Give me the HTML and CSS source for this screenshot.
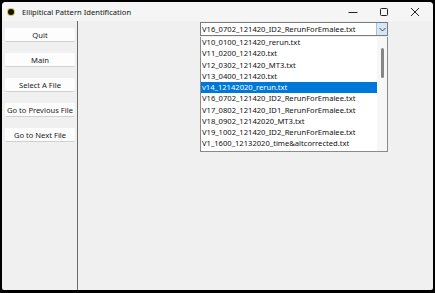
FILE: index.html
```html
<!DOCTYPE html>
<html lang="en">
<head>
  <meta charset="UTF-8">
  <title>Ellipitical Pattern Identification</title>
  <link rel="stylesheet" href="styles.css">
</head>
<body>
  <div class="window">
    <!-- title bar -->
    <div class="titlebar">
      <span class="app-icon"></span>
      <span class="title">Ellipitical Pattern Identification</span>
      <div class="controls">
        <svg width="10" height="10" viewBox="0 0 10 10"><path d="M0.5 5.5h9" stroke="#222" stroke-width="1"/></svg>
        <svg width="10" height="10" viewBox="0 0 10 10"><rect x="1.5" y="1.5" width="7" height="7" rx="1" fill="none" stroke="#222" stroke-width="1"/></svg>
        <svg width="10" height="10" viewBox="0 0 10 10"><path d="M1 1l8 8M9 1l-8 8" stroke="#222" stroke-width="1"/></svg>
      </div>
    </div>

    <div class="main">
      <!-- left buttons -->
      <div class="sidebar">
        <button class="btn">Quit</button>
        <button class="btn">Main</button>
        <button class="btn">Select A File</button>
        <button class="btn">Go to Previous File</button>
        <button class="btn">Go to Next File</button>
      </div>

      <!-- file chooser -->
      <div class="content">
        <div class="combo">
          <div class="combo-text">V16_0702_121420_ID2_RerunForEmalee.txt</div>
          <div class="combo-arrow">
            <svg width="7" height="5" viewBox="0 0 7 5"><path d="M0.5 1l3 3 3-3" fill="none" stroke="#444" stroke-width="1"/></svg>
          </div>
        </div>
        <div class="dropdown">
          <ul class="items">
            <li>V10_0100_121420_rerun.txt</li>
            <li>V11_0200_121420.txt</li>
            <li>V12_0302_121420_MT3.txt</li>
            <li>V13_0400_121420.txt</li>
            <li class="selected">v14_12142020_rerun.txt</li>
            <li>V16_0702_121420_ID2_RerunForEmalee.txt</li>
            <li>V17_0802_121420_ID1_RerunForEmalee.txt</li>
            <li>V18_0902_12142020_MT3.txt</li>
            <li>V19_1002_121420_ID2_RerunForEmalee.txt</li>
            <li>V1_1600_12132020_time&amp;altcorrected.txt</li>
          </ul>
          <div class="scrollbar"><div class="thumb"></div></div>
        </div>
      </div>
    </div>
  </div>
</body>
</html>
```

FILE: styles.css
```css
/* reset */
body {
  margin: 0;
  background: #000;
  font-family: "Noto Sans", "Open Sans", sans-serif;
  color: #111;
}

/* === window === */
.window {
  margin: 2px 2px 3px 2px;
  height: 288px;
  background: #f0f0f0;
  border-radius: 4px 4px 2px 2px;
  display: flex;
  flex-direction: column;
  overflow: hidden;
}

.titlebar {
  height: 19px;
  background: #f5f5f5;
  display: flex;
  align-items: center;
  padding-left: 6px;
}
.app-icon {
  width: 6px;
  height: 6px;
  border-radius: 50%;
  background: #111;
  box-shadow: 0 0 0 1px #d8c24a;
  margin-right: 8px;
}
.title {
  font-size: 7.6px;
  color: #111;
}
.controls {
  margin-left: auto;
  display: flex;
  gap: 21px;
  padding-right: 13px;
}

/* === body === */
.main {
  flex: 1;
  display: flex;
}
.sidebar {
  width: 76px;
  border-right: 1px solid #6a6a6a;
  display: flex;
  flex-direction: column;
  gap: 11px;
  padding: 7px 0 0 3px;
  box-sizing: border-box;
}
.btn {
  width: 70px;
  height: 14px;
  padding: 0;
  background: #fdfdfd;
  border: none;
  border-bottom: 1px solid #d0d0d0;
  border-radius: 2px;
  font-family: inherit;
  font-size: 7.6px;
  color: #222;
  white-space: nowrap;
}

.content {
  flex: 1;
  padding: 1px 0 0 122px;
}

/* === combobox === */
.combo {
  width: 188px;
  height: 14px;
  box-sizing: border-box;
  border: 1px solid #7a7a7a;
  background: #fff;
  display: flex;
}
.combo-text {
  flex: 1;
  font-size: 7.6px;
  line-height: 12px;
  padding-left: 1px;
  white-space: nowrap;
  overflow: hidden;
}
.combo-arrow {
  width: 10px;
  background: #d5e7f7;
  border-left: 1px solid #9cc3e5;
  display: flex;
  align-items: center;
  justify-content: center;
}

.dropdown {
  width: 188px;
  height: 115px;
  box-sizing: border-box;
  border: 1px solid #8a8a8a;
  border-top: none;
  background: #fff;
  display: flex;
  margin-top: 1px;
}
.items {
  flex: 1;
  list-style: none;
  margin: 0;
  padding: 0;
}
.items li {
  height: 11.25px;
  line-height: 11.25px;
  font-size: 7.6px;
  padding-left: 1px;
  white-space: nowrap;
}
.items li.selected {
  background: #0078d7;
  color: #fff;
}
.scrollbar {
  width: 10px;
  background: #f7f7f7;
  padding-top: 11px;
  display: flex;
  justify-content: center;
}
.thumb {
  width: 3px;
  height: 30px;
  border-radius: 2px;
  background: #858585;
}
```
